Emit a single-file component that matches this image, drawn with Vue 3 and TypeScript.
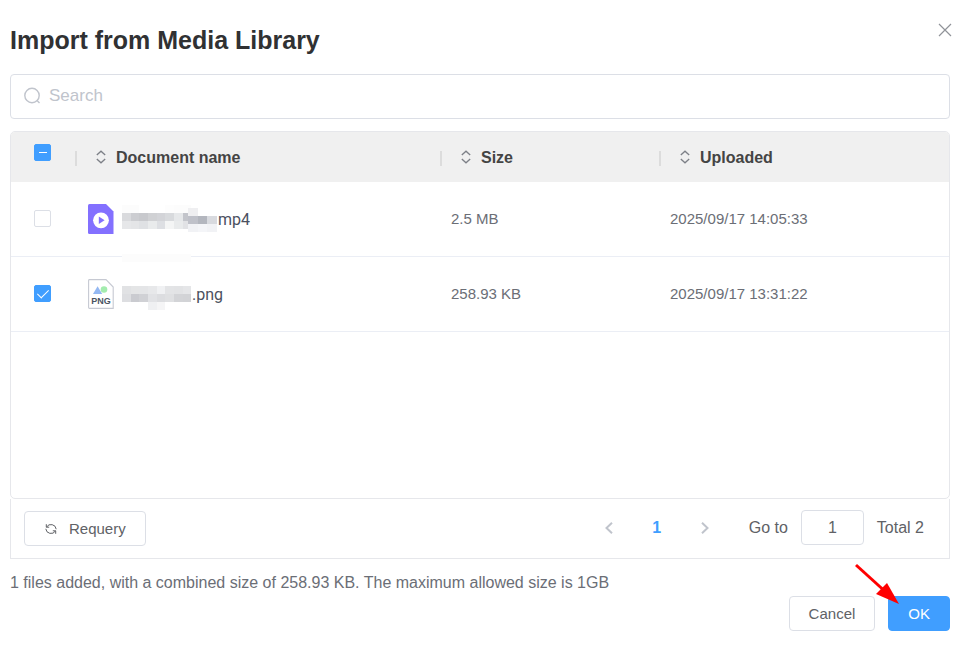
<script setup lang="ts">
import { computed, ref } from 'vue'

interface Block {
  x: number
  y: number
  w: number
  h: number
  fill: string
}

interface MediaFile {
  id: number
  kind: 'video' | 'png'
  suffix: string
  maskWidth: number
  mask: Block[]
  size: string
  uploaded: string
}

function strip(y: number, colors: string[], x = 0, w = 8.65, h = 8): Block[] {
  return colors.map((fill, i) => ({ x: x + i * w, y, w: w + 0.1, h, fill }))
}

const files: MediaFile[] = [
  {
    id: 1,
    kind: 'video',
    suffix: 'mp4',
    maskWidth: 95,
    mask: [
      ...strip(2, ['#fcfcfc', '#fcfcfc', '#ffffff', '#ffffff', '#ffffff', '#fdfdfd', '#fcfcfc', '#fcfcfc']),
      ...strip(10, ['#d9dadd', '#cccdd1', '#c8c9cd', '#d0d1d4', '#d3d4d8', '#d8dadd', '#e6e8ea', '#c3c5cb']),
      ...strip(18, ['#e6e7e9', '#e4e5e7', '#dfe1e4', '#e9ebec', '#dddfe3', '#f4f5f5', '#e9ebec', '#e1e2e5']),
      ...strip(5, ['#efeff1'], 66, 10),
      ...strip(13, ['#bfc1c9', '#b3b6be', '#d8dadf'], 66, 9.7),
      ...strip(21, ['#f1f2f5', '#f4f5f8', '#f1f2f5'], 66, 9.7),
    ],
    size: '2.5 MB',
    uploaded: '2025/09/17 14:05:33',
  },
  {
    id: 2,
    kind: 'png',
    suffix: '.png',
    maskWidth: 69,
    mask: [
      { x: 0, y: -24, w: 69, h: 8, fill: '#fcfcfc' },
      ...strip(8, ['#e1e2e4', '#e4e5e6', '#e4e5e7', '#e7e8ea', '#f0f1f3', '#e3e4e6', '#e2e3e5', '#e5e6e8']),
      ...strip(16, ['#dddee1', '#cacbd0', '#d0d1d5', '#e1e2e5', '#dcdde0', '#dfe0e2', '#d3d4d7', '#d2d3d6']),
      ...strip(24, ['#eff0f2', '#f5f5f6'], 26),
    ],
    size: '258.93 KB',
    uploaded: '2025/09/17 13:31:22',
  },
]

const columns = ['Document name', 'Size', 'Uploaded']
const query = ref('')
const page = ref('1')
const selected = ref<number[]>([2])

const partial = computed(() => selected.value.length > 0 && selected.value.length < files.length)
const all = computed(() => selected.value.length === files.length)

function toggleAll() {
  selected.value = all.value ? [] : files.map((f) => f.id)
}
</script>

<template>
  <main class="dialog">
    <header class="head">
      <h1>Import from Media Library</h1>
      <button class="close" type="button" aria-label="Close">
        <svg width="14" height="14" viewBox="0 0 14 14"><path d="M1 1 13 13M13 1 1 13" /></svg>
      </button>
    </header>

    <label class="search">
      <svg width="18" height="18" viewBox="0 0 18 18"><circle cx="9" cy="8.500" r="7.200" /><path d="M14 13.500 16.500 16" /></svg>
      <input v-model="query" type="text" placeholder="Search" aria-label="Search" />
    </label>

    <section class="list">
      <table>
        <colgroup>
          <col class="c-check" />
          <col />
          <col class="c-size" />
          <col class="c-date" />
        </colgroup>
        <thead>
          <tr>
            <th class="check-head">
              <input
                type="checkbox"
                aria-label="Select all"
                :checked="all"
                :class="{ partial }"
                @change="toggleAll"
              />
            </th>
            <th v-for="name in columns" :key="name">
              <div class="th">
                <span class="sep"></span>
                <svg width="10" height="14" viewBox="0 0 10 14"><path d="M.8 5 5 1.2 9.2 5M.8 9 5 12.8 9.2 9" /></svg>
                <span class="label">{{ name }}</span>
              </div>
            </th>
          </tr>
        </thead>
        <tbody>
          <tr v-for="file in files" :key="file.id">
            <td class="check">
              <input v-model="selected" type="checkbox" :value="file.id" :aria-label="'Select ' + file.suffix" />
            </td>
            <td>
              <div class="file">
                <svg v-if="file.kind === 'video'" width="26" height="30" viewBox="0 0 26 30">
                  <path d="M1.5 0H18l7.5 7.5V30H1.5Q0 30 0 28.5v-27Q0 0 1.5 0Z" fill="#8370ff" />
                  <circle cx="13" cy="16.3" r="7.9" fill="#fff" />
                  <path d="M10.800 12.600v7.400l5.800-3.700Z" fill="#8370ff" />
                </svg>
                <svg v-else width="26" height="30" viewBox="0 0 26 30">
                  <path d="M1.5.6H18L25.2 8v21.4H1.5Q.6 29.4.6 28.5V1.5Q.6.6 1.5.6Z" fill="#fff" stroke="#c6c9d2" stroke-width="1.1" />
                  <path d="M5 15 9.6 7.2 14.2 15Z" fill="#94b8f2" />
                  <circle cx="16" cy="10.5" r="3.3" fill="#a3ecae" />
                  <text x="13" y="25" text-anchor="middle" class="ext">PNG</text>
                </svg>
                <svg class="mask" :width="file.maskWidth" height="32" aria-hidden="true">
                  <rect
                    v-for="(b, i) in file.mask"
                    :key="i"
                    :x="b.x"
                    :y="b.y"
                    :width="b.w"
                    :height="b.h"
                    :fill="b.fill"
                    shape-rendering="crispEdges"
                  />
                </svg>
                <span>{{ file.suffix }}</span>
              </div>
            </td>
            <td class="meta">{{ file.size }}</td>
            <td class="meta">{{ file.uploaded }}</td>
          </tr>
        </tbody>
      </table>
    </section>

    <footer class="bar">
      <button class="btn requery" type="button">
        <svg width="14" height="14" viewBox="0 0 14 14">
          <path d="M2.3 2.2V5.2H5.2M2.6 5A5.2 5.2 0 0 1 12.2 7.2M11.7 11.8V8.8H8.8M11.4 9A5.2 5.2 0 0 1 1.8 6.8" />
        </svg>
        <span>Requery</span>
      </button>
      <div class="paging">
        <nav class="pager" aria-label="Pages">
          <button type="button" aria-label="Previous page">
            <svg width="8" height="12" viewBox="0 0 8 12"><path d="M7 .8 1.5 6 7 11.2" /></svg>
          </button>
          <button type="button" class="current">1</button>
          <button type="button" aria-label="Next page">
            <svg width="8" height="12" viewBox="0 0 8 12"><path d="M1 .8 6.5 6 1 11.2" /></svg>
          </button>
        </nav>
        <label class="goto">Go to <input v-model="page" type="text" /></label>
        <span>Total {{ files.length }}</span>
      </div>
    </footer>

    <p class="summary">1 files added, with a combined size of 258.93 KB. The maximum allowed size is 1GB</p>

    <div class="actions">
      <button class="btn" type="button">Cancel</button>
      <div class="confirm">
        <button class="btn primary" type="button">OK</button>
        <svg class="pointer" width="46" height="42" viewBox="0 0 46 42" aria-hidden="true">
          <path d="M2 2 29 26.5" stroke="#f00" stroke-width="3" />
          <path d="M33 20 45 41 22 31Z" fill="#f00" />
        </svg>
      </div>
    </div>
  </main>
</template>

<style>
body {
  background: #fff;
}
</style>

<style scoped>
.dialog {
  padding: 18px 13px 24px 10px;
  font-family: 'Liberation Sans', Arial, sans-serif;
  font-size: 16px;
  color: #606266;
}
.dialog * {
  box-sizing: border-box;
}
svg {
  display: block;
  flex: none;
  fill: none;
}
button,
input {
  font-family: inherit;
  color: inherit;
}
button {
  padding: 0;
  border: 0;
  background: none;
}
.head {
  display: flex;
  justify-content: space-between;
  align-items: flex-start;
  height: 56px;
}
h1 {
  margin: 0;
  font-size: 25px;
  line-height: 44px;
  color: #303133;
}
.close {
  width: 24px;
  height: 24px;
  display: grid;
  place-items: center;
  margin-right: -7px;
}
.close svg {
  stroke: #909399;
  stroke-width: 1.2;
}
.search {
  display: flex;
  align-items: center;
  gap: 8px;
  height: 45px;
  padding: 0 12px 2px;
  border: 1px solid #dcdfe6;
  border-radius: 4px;
}
.search svg {
  stroke: #c0c4cc;
  stroke-width: 1.4;
}
.search input {
  flex: 1;
  border: 0;
  padding: 0;
  outline: 0;
  font-size: 17px;
}
.search input::placeholder {
  color: #c0c4cc;
}
.list {
  min-height: 368px;
  margin-top: 12px;
  border: 1px solid #e6e7eb;
  border-radius: 5px;
  overflow: hidden;
}
table {
  width: 100%;
  table-layout: fixed;
  border-collapse: separate;
  border-spacing: 0;
}
.c-check {
  width: 64px;
}
.c-size {
  width: 219px;
}
.c-date {
  width: 290px;
}
th {
  height: 50px;
  padding: 0;
  background: #f0f0f0;
  color: #444;
  text-align: left;
}
.th {
  display: flex;
  align-items: center;
  gap: 10px;
}
.th svg {
  stroke: #7d8087;
  stroke-width: 1.3;
}
.label {
  padding-top: 2px;
}
.sep {
  width: 2px;
  height: 15px;
  margin: 3px 9px 0 0;
  background: #dcdcdc;
}
td {
  height: 75px;
  padding: 0 11px;
  border-bottom: 1px solid #ebeef5;
}
.check-head {
  padding: 12px 0 0 23px;
  vertical-align: top;
}
.check {
  padding: 0 0 2px 23px;
}
input[type='checkbox'] {
  appearance: none;
  display: block;
  position: relative;
  width: 17px;
  height: 17px;
  margin: 0;
  border: 1px solid #dcdfe6;
  border-radius: 2px;
  background: #fff;
}
input[type='checkbox']:checked,
input.partial {
  border-color: #409eff;
  background: #409eff;
}
input[type='checkbox']:checked::after {
  content: '';
  position: absolute;
  left: 5px;
  top: 1px;
  width: 5px;
  height: 10px;
  border: solid #fff;
  border-width: 0 1px 1px 0;
  transform: rotate(45deg);
}
input.partial::after {
  content: '';
  position: absolute;
  left: 4px;
  top: 7px;
  width: 8px;
  height: 1px;
  background: #fff;
}
.file {
  display: flex;
  align-items: center;
  padding-left: 2px;
  font-family: Roboto, sans-serif;
  color: #4b5060;
}
.ext {
  font: bold 9px 'Liberation Sans', sans-serif;
  fill: #4b5563;
}
.mask {
  margin: 0 1px 0 8px;
  overflow: visible;
}
.meta {
  padding-bottom: 2px;
  font-size: 15px;
  color: #6b6e76;
}
.bar {
  display: flex;
  align-items: center;
  justify-content: space-between;
  height: 60px;
  padding: 0 25px 0 13px;
  border: 1px solid #e6e7eb;
  border-top: 0;
}
.btn {
  height: 35px;
  padding: 0 19px;
  border: 1px solid #dcdfe6;
  border-radius: 4px;
  background: #fff;
  font-size: 15px;
}
.requery {
  display: flex;
  align-items: center;
  gap: 11px;
}
.requery svg {
  stroke: #606266;
  stroke-width: 1;
}
.paging {
  display: flex;
  align-items: center;
  gap: 13px;
  padding-bottom: 2px;
}
.pager {
  display: flex;
  gap: 8px;
  margin-right: 11px;
}
.pager button {
  width: 40px;
  height: 35px;
  display: grid;
  place-items: center;
  font-size: 16px;
}
.pager svg {
  stroke: #c0c4cc;
  stroke-width: 2;
}
.pager .current {
  color: #409eff;
  font-weight: bold;
}
.goto {
  display: flex;
  align-items: center;
  gap: 13px;
}
.goto input {
  width: 63px;
  height: 35px;
  padding: 0;
  border: 1px solid #dcdfe6;
  border-radius: 4px;
  font-size: 16px;
  text-align: center;
}
.summary {
  margin: 14px 0 0;
  line-height: 20px;
  color: #6b6e76;
}
.actions {
  display: flex;
  justify-content: flex-end;
  gap: 13px;
  margin-top: 3px;
}
.confirm {
  position: relative;
}
.primary {
  border-color: #409eff;
  background: #409eff;
  color: #fff;
}
.pointer {
  position: absolute;
  left: -34px;
  top: -33px;
}
</style>
